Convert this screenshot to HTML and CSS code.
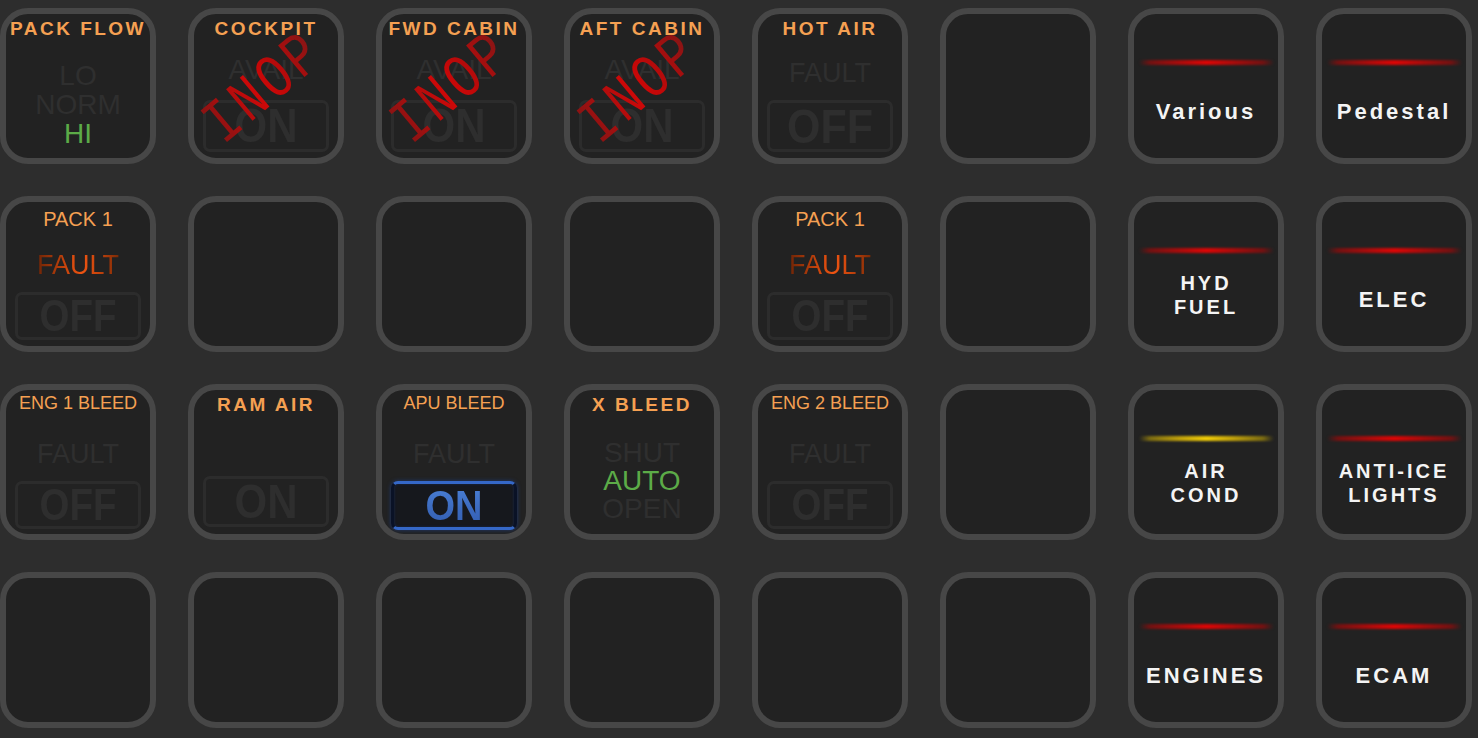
FILE: index.html
```html
<!DOCTYPE html>
<html lang="en">
<head>
<meta charset="utf-8">
<title>Overhead Deck</title>
<link rel="stylesheet" href="styles.css">
</head>
<body>
<main class="deck">
  <!-- Row 1 -->
  <div class="key k-sel">
    <div class="title bold">PACK FLOW</div>
    <div class="stack">
      <span class="leg">LO</span>
      <span class="leg">NORM</span>
      <span class="leg green">HI</span>
    </div>
  </div>
  <div class="key k-inop">
    <div class="title bold">COCKPIT</div>
    <div class="leg">AVAIL</div>
    <div class="sw"><span>ON</span></div>
    <div class="inop">INOP</div>
  </div>
  <div class="key k-inop">
    <div class="title bold">FWD CABIN</div>
    <div class="leg">AVAIL</div>
    <div class="sw"><span>ON</span></div>
    <div class="inop">INOP</div>
  </div>
  <div class="key k-inop">
    <div class="title bold">AFT CABIN</div>
    <div class="leg">AVAIL</div>
    <div class="sw"><span>ON</span></div>
    <div class="inop">INOP</div>
  </div>
  <div class="key k-hot">
    <div class="title bold">HOT AIR</div>
    <div class="leg fault">FAULT</div>
    <div class="sw"><span>OFF</span></div>
  </div>
  <div class="key"></div>
  <div class="key k-nav">
    <div class="glow red"></div>
    <div class="label">Various</div>
  </div>
  <div class="key k-nav">
    <div class="glow red"></div>
    <div class="label">Pedestal</div>
  </div>

  <!-- Row 2 -->
  <div class="key k-pack">
    <div class="title r20">PACK 1</div>
    <div class="leg fault lit">FAULT</div>
    <div class="sw"><span>OFF</span></div>
  </div>
  <div class="key"></div>
  <div class="key"></div>
  <div class="key"></div>
  <div class="key k-pack">
    <div class="title r20">PACK 1</div>
    <div class="leg fault lit">FAULT</div>
    <div class="sw"><span>OFF</span></div>
  </div>
  <div class="key"></div>
  <div class="key k-nav">
    <div class="glow red"></div>
    <div class="label two">HYD<br>FUEL</div>
  </div>
  <div class="key k-nav">
    <div class="glow red"></div>
    <div class="label">ELEC</div>
  </div>

  <!-- Row 3 -->
  <div class="key k-bleed">
    <div class="title r18">ENG 1 BLEED</div>
    <div class="leg fault">FAULT</div>
    <div class="sw"><span>OFF</span></div>
  </div>
  <div class="key k-ram">
    <div class="title bold">RAM AIR</div>
    <div class="sw"><span>ON</span></div>
  </div>
  <div class="key k-bleed">
    <div class="title r18">APU BLEED</div>
    <div class="leg fault">FAULT</div>
    <div class="sw on"><span>ON</span></div>
  </div>
  <div class="key k-xbleed">
    <div class="title bold">X BLEED</div>
    <div class="stack">
      <span class="leg">SHUT</span>
      <span class="leg green">AUTO</span>
      <span class="leg">OPEN</span>
    </div>
  </div>
  <div class="key k-bleed">
    <div class="title r18">ENG 2 BLEED</div>
    <div class="leg fault">FAULT</div>
    <div class="sw"><span>OFF</span></div>
  </div>
  <div class="key"></div>
  <div class="key k-nav">
    <div class="glow yellow"></div>
    <div class="label two">AIR<br>COND</div>
  </div>
  <div class="key k-nav">
    <div class="glow red"></div>
    <div class="label two">ANTI-ICE<br>LIGHTS</div>
  </div>

  <!-- Row 4 -->
  <div class="key"></div>
  <div class="key"></div>
  <div class="key"></div>
  <div class="key"></div>
  <div class="key"></div>
  <div class="key"></div>
  <div class="key k-nav">
    <div class="glow red"></div>
    <div class="label">ENGINES</div>
  </div>
  <div class="key k-nav">
    <div class="glow red"></div>
    <div class="label">ECAM</div>
  </div>
</main>
</body>
</html>
```

FILE: styles.css
```css
html, body {
  margin: 0;
  padding: 0;
  background: #2d2d2d;
}

body {
  font-family: "Liberation Sans", Arial, sans-serif;
}

.deck {
  display: grid;
  grid-template-columns: repeat(8, 156px);
  grid-template-rows: repeat(4, 156px);
  gap: 32px;
  padding-top: 8px;
}

.key {
  box-sizing: border-box;
  border: 6px solid #474747;
  border-radius: 28px;
  background: #222222;
  position: relative;
  overflow: hidden;
  display: flex;
  flex-direction: column;
  align-items: center;
}

/* titles */
.title {
  color: #f5a052;
  line-height: 22px;
  white-space: nowrap;
}
.title.bold {
  font-weight: 700;
  font-size: 19px;
  letter-spacing: 2.5px;
  margin-top: 4px;
}
.title.r20 {
  font-size: 20px;
  margin-top: 6px;
}
.title.r18 {
  font-size: 18px;
  margin-top: 2px;
}

/* legends */
.leg {
  display: block;
  font-size: 28px;
  line-height: 28px;
  color: #2f2f2f;
  white-space: nowrap;
}
.leg.fault {
  font-size: 27px;
}
.leg.green {
  color: #5cab48;
}
.leg.lit {
  background: linear-gradient(90deg, #6e2406 0%, #c8440c 35%, #ee5412 55%, #c8440c 75%, #7a2a06 100%);
  -webkit-background-clip: text;
  background-clip: text;
  color: transparent;
}

.stack {
  display: flex;
  flex-direction: column;
  align-items: center;
}

/* switch boxes */
.sw {
  box-sizing: border-box;
  width: 126px;
  border: 3px solid #2c2c2c;
  border-radius: 7px;
  display: flex;
  align-items: center;
  justify-content: center;
  font-weight: 700;
  color: #2e2e2e;
  line-height: 1;
}
.sw span {
  display: block;
  transform: scaleY(1.13);
}
.sw.on {
  background: #16181d;
  border-color: #0a1226;
  border-top-color: #3568c8;
  border-bottom-color: #3568c8;
  box-shadow: 0 0 4px rgba(30, 80, 190, 0.5), inset 0 0 3px rgba(30, 70, 170, 0.35);
  color: #3e6fc6;
}
.sw.on span {
  background: linear-gradient(180deg, #4a80d6 0%, #3b69bd 60%, #3360b4 100%);
  -webkit-background-clip: text;
  background-clip: text;
  color: transparent;
}

/* key types */
.k-sel .stack {
  margin-top: 21px;
}
.k-sel .leg {
  line-height: 29px;
}

.k-inop .leg {
  margin-top: 16px;
}
.k-inop .sw {
  margin-top: 16px;
  height: 52px;
  font-size: 42px;
}

.k-hot .leg {
  margin-top: 19px;
}
.k-hot .sw {
  margin-top: 13px;
  height: 52px;
  font-size: 43px;
}

.k-pack .leg {
  margin-top: 21px;
}
.k-pack .sw {
  margin-top: 13px;
  height: 48px;
  font-size: 38.5px;
}

.k-bleed .leg {
  margin-top: 26px;
}
.k-bleed .sw {
  margin-top: 13px;
  height: 48px;
  font-size: 38.5px;
}
.k-bleed .sw.on {
  height: 49px;
  font-size: 38px;
}
.k-bleed .sw.on span {
  transform: scaleY(1.1);
}

.k-ram .sw {
  margin-top: 60px;
  height: 51px;
  font-size: 42px;
}

.k-xbleed .stack {
  margin-top: 23px;
}

/* INOP overlay */
.inop {
  position: absolute;
  left: calc(50% - 1px);
  top: calc(50% + 3px);
  transform: translate(-50%, -50%) rotate(-40deg) scale(1, 1.25);
  font-family: "Liberation Mono", "Courier New", monospace;
  font-size: 50px;
  letter-spacing: 4px;
  line-height: 1;
  background: linear-gradient(90deg, #861414 0%, #cf0808 45%, #c20808 60%, #841616 100%);
  -webkit-background-clip: text;
  background-clip: text;
  color: transparent;
  white-space: nowrap;
}

/* navigation keys */
.k-nav .glow {
  width: 135px;
  height: 5px;
  margin-top: 46px;
  border-radius: 3px;
  filter: blur(0.8px);
  flex: none;
}
.glow.red {
  background: linear-gradient(90deg, rgba(110, 10, 10, 0) 0%, #701212 8%, #a80c0c 30%, #dc0606 50%, #a80c0c 70%, #701212 92%, rgba(110, 10, 10, 0) 100%);
}
.glow.yellow {
  background: linear-gradient(90deg, rgba(120, 100, 10, 0) 0%, #7a6a12 8%, #bfa00c 30%, #f0cc08 50%, #bfa00c 70%, #7a6a12 92%, rgba(120, 100, 10, 0) 100%);
}

.label {
  flex: 1;
  display: flex;
  align-items: center;
  justify-content: center;
  text-align: center;
  color: #f4f4f4;
  font-weight: 700;
  font-size: 22px;
  line-height: 26px;
  letter-spacing: 3px;
}
.label.two {
  font-size: 20px;
  line-height: 24px;
  padding-bottom: 10px;
}
```
